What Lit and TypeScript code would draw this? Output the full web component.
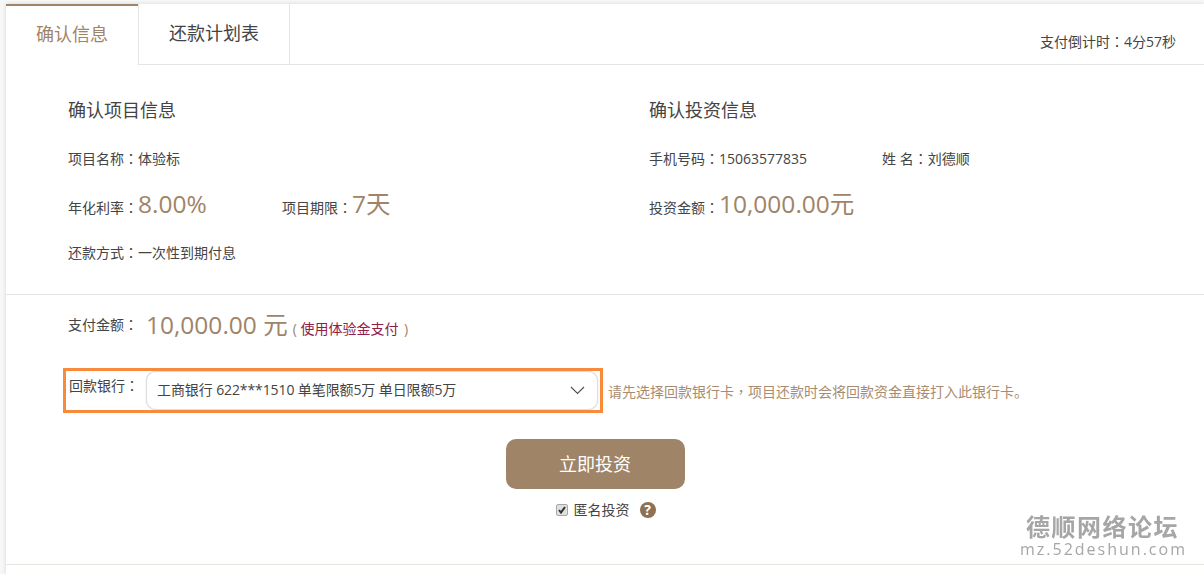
import { css, html, LitElement } from 'lit';
import { customElement } from 'lit/decorators.js';

// colon and comma sit centred in the cell in the reference, the TC face has them that way
const colon = html`<span class="mid">：</span>`;

@customElement('app-root')
export class AppRoot extends LitElement {
  static override styles = css`
    :host {
      display: block;
      position: relative;
      width: 1204px;
      height: 574px;
      overflow: hidden;
      box-sizing: border-box;
      padding: 4px 0 0 6px;
      background: #f7f7f7;
      color: #444;
      font-family: 'Open Sans', 'Noto Sans CJK SC', sans-serif;
      font-size: 14px;
    }
    .mid {
      font-family: 'Noto Sans CJK TC', sans-serif;
    }
    .card {
      height: 570px;
      background: #fff;
      box-shadow: 0 0 4px rgba(0, 0, 0, 0.14);
    }
    .tabs {
      display: flex;
      box-sizing: border-box;
      height: 61px;
      border-bottom: 1px solid #e4e4e4;
    }
    .tab {
      box-sizing: border-box;
      height: 60px;
      font-size: 18px;
      line-height: 58px;
      text-align: center;
    }
    .tab.active {
      width: 132px;
      height: 61px;
      border-top: 2px solid #a08468;
      background: #fff;
      color: #a08468;
      line-height: 56px;
    }
    .tab.plain {
      width: 152px;
      border-left: 1px solid #e4e4e4;
      border-right: 1px solid #e4e4e4;
    }
    .timer {
      margin-left: auto;
      padding: 27px 28px 0 0;
      line-height: 20px;
    }
    .info {
      display: flex;
      box-sizing: border-box;
      height: 230px;
      padding: 30px 0 0 62px;
      border-bottom: 1px solid #e4e4e4;
    }
    .col-left {
      width: 581px;
    }
    h3 {
      margin: 0 0 18px;
      font-size: 18px;
      font-weight: 400;
      line-height: 30px;
    }
    .row {
      display: flex;
      align-items: baseline;
      height: 46px;
      line-height: 30px;
    }
    .row.money {
      height: 48px;
    }
    .cell-a {
      width: 214px;
    }
    .col-right .cell-a {
      width: 233px;
    }
    .big {
      color: #a08468;
      font-size: 24.5px;
    }
    .pay {
      padding: 12px 0 0 62px;
    }
    .amount-line {
      display: flex;
      align-items: baseline;
      line-height: 36px;
    }
    .amount-label {
      align-self: flex-start;
      width: 78px;
      line-height: 34px;
    }
    .amount {
      color: #a08468;
      font-size: 24.5px;
    }
    .exp {
      margin-left: 5px;
      color: #a08468;
    }
    .exp em {
      margin-right: 2px;
      color: #8f2148;
      font-style: normal;
    }
    .bank-line {
      display: flex;
      align-items: center;
      margin-top: 21px;
      margin-left: -5px;
    }
    .bank-box {
      display: flex;
      box-sizing: border-box;
      width: 540px;
      height: 45px;
      padding: 0 2px 0 3px;
      border: 3px solid #f98a3c;
    }
    .bank-label {
      width: 77px;
      padding-top: 4px;
      line-height: 20px;
    }
    .select {
      display: flex;
      flex: 1;
      align-items: center;
      justify-content: space-between;
      box-sizing: border-box;
      padding: 0 12px 0 10px;
      border: 1px solid #ddd;
      border-radius: 10px;
      box-shadow: 0 0 1px #aaa;
      letter-spacing: -0.1px;
    }
    .select span {
      padding-bottom: 3px;
    }
    .hint {
      margin-left: 5px;
      color: #a98c70;
    }
    .actions {
      display: flex;
      flex-direction: column;
      align-items: center;
      width: 1054px;
      margin-top: 26px;
    }
    .btn {
      width: 179px;
      height: 50px;
      border-radius: 10px;
      background: #a08468;
      color: #fff;
      font-size: 18px;
      line-height: 50px;
      text-align: center;
    }
    .anon {
      display: flex;
      align-items: center;
      margin-top: 11px;
      padding-left: 21px;
      line-height: 20px;
    }
    .box {
      display: flex;
      align-items: center;
      justify-content: center;
      box-sizing: border-box;
      width: 12px;
      height: 12px;
      margin-right: 6px;
      border: 1px solid #a8a8a8;
      border-radius: 2px;
      background: #e0e0e0;
    }
    .q {
      width: 16px;
      height: 16px;
      margin-left: 10px;
      border-radius: 50%;
      background: #8d7152;
      color: #fff;
      font-size: 14px;
      font-weight: 700;
      line-height: 16px;
      text-align: center;
    }
    .bottom {
      position: absolute;
      left: 6px;
      right: 0;
      top: 564px;
      height: 1px;
      background: #e8e4de;
    }
    .mark {
      position: absolute;
      top: 513px;
      right: 19px;
      width: 165px;
      color: #a6a6a6;
      text-align: center;
      filter: blur(0.4px);
    }
    .mark b {
      display: block;
      height: 29px;
      font-size: 24px;
      font-weight: 700;
      letter-spacing: 1.5px;
      line-height: 28px;
    }
    .mark span {
      display: block;
      font-size: 16px;
      letter-spacing: 2px;
      line-height: 15px;
      white-space: nowrap;
    }
  `;

  override render() {
    return html`
      <div class="card">
        <div class="tabs">
          <div class="tab active">确认信息</div>
          <div class="tab plain">还款计划表</div>
          <div class="timer">支付倒计时${colon}4分57秒</div>
        </div>
        <div class="info">
          <div class="col-left">
            <h3>确认项目信息</h3>
            <div class="row">项目名称${colon}体验标</div>
            <div class="row money">
              <div class="cell-a">年化利率${colon}<span class="big">8.00%</span></div>
              <div>项目期限${colon}<span class="big">7天</span></div>
            </div>
            <div class="row">还款方式${colon}一次性到期付息</div>
          </div>
          <div class="col-right">
            <h3>确认投资信息</h3>
            <div class="row">
              <div class="cell-a">手机号码${colon}15063577835</div>
              <div>姓 名${colon}刘德顺</div>
            </div>
            <div class="row money">投资金额${colon}<span class="big">10,000.00元</span></div>
          </div>
        </div>
        <div class="pay">
          <div class="amount-line">
            <div class="amount-label">支付金额${colon}</div>
            <div class="amount">10,000.00 元</div>
            <div class="exp">( <em>使用体验金支付</em> )</div>
          </div>
          <div class="bank-line">
            <div class="bank-box">
              <div class="bank-label">回款银行${colon}</div>
              <div class="select">
                <span>工商银行 622***1510 单笔限额5万 单日限额5万</span>
                <svg width="15" height="9" viewBox="0 0 15 9">
                  <path d="M1 1l6.5 6.5L14 1" fill="none" stroke="#555" stroke-width="1.2" />
                </svg>
              </div>
            </div>
            <div class="hint">请先选择回款银行卡<span class="mid">，</span>项目还款时会将回款资金直接打入此银行卡。</div>
          </div>
          <div class="actions">
            <div class="btn">立即投资</div>
            <div class="anon">
              <span class="box">
                <svg width="10" height="10" viewBox="0 0 10 10">
                  <path d="M2 5l2 2.5L8 2" fill="none" stroke="#333" stroke-width="2" />
                </svg>
              </span>
              匿名投资
              <span class="q">?</span>
            </div>
          </div>
        </div>
      </div>
      <div class="bottom"></div>
      <div class="mark"><b>德顺网络论坛</b><span>mz.52deshun.com</span></div>
    `;
  }
}
